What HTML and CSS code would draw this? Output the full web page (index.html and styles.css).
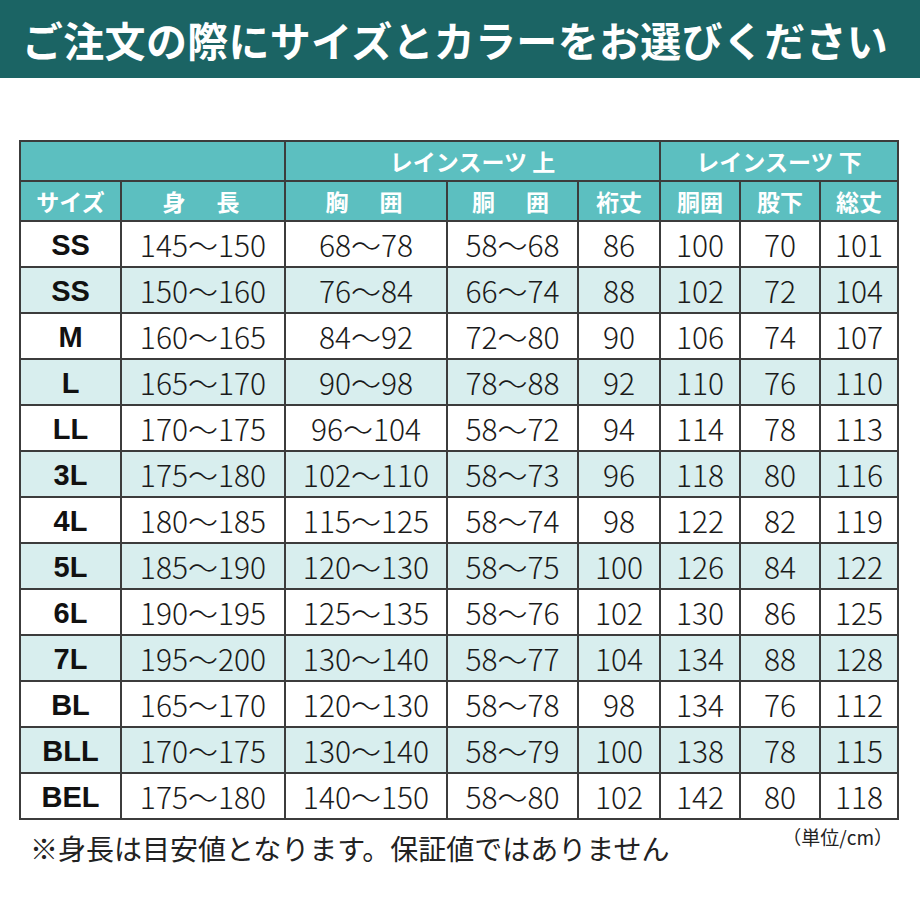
FILE: index.html
```html
<!DOCTYPE html>
<html lang="ja">
<head>
<meta charset="utf-8">
<link rel="stylesheet" href="styles.css">
</head>
<body>
<header class="title-bar"><h1 class="title">ご注文の際にサイズとカラーをお選びください</h1></header>
<main class="content">
<table class="size-table">
<colgroup>
<col class="c1"><col class="c2"><col class="c3"><col class="c4"><col class="c5"><col class="c6"><col class="c7"><col class="c8">
</colgroup>
<thead>
<tr class="hrow">
<th colspan="2"></th>
<th colspan="3">レインスーツ 上</th>
<th colspan="3">レインスーツ 下</th>
</tr>
<tr class="hrow">
<th>サイズ</th>
<th class="spaced">身　長</th>
<th class="spaced">胸　囲</th>
<th class="spaced">胴　囲</th>
<th>裄丈</th>
<th>胴囲</th>
<th>股下</th>
<th>総丈</th>
</tr>
</thead>
<tbody>
<tr><td class="size">SS</td><td>145～150</td><td>68～78</td><td>58～68</td><td>86</td><td>100</td><td>70</td><td>101</td></tr>
<tr class="alt"><td class="size">SS</td><td>150～160</td><td>76～84</td><td>66～74</td><td>88</td><td>102</td><td>72</td><td>104</td></tr>
<tr><td class="size">M</td><td>160～165</td><td>84～92</td><td>72～80</td><td>90</td><td>106</td><td>74</td><td>107</td></tr>
<tr class="alt"><td class="size">L</td><td>165～170</td><td>90～98</td><td>78～88</td><td>92</td><td>110</td><td>76</td><td>110</td></tr>
<tr><td class="size">LL</td><td>170～175</td><td>96～104</td><td>58～72</td><td>94</td><td>114</td><td>78</td><td>113</td></tr>
<tr class="alt"><td class="size">3L</td><td>175～180</td><td>102～110</td><td>58～73</td><td>96</td><td>118</td><td>80</td><td>116</td></tr>
<tr><td class="size">4L</td><td>180～185</td><td>115～125</td><td>58～74</td><td>98</td><td>122</td><td>82</td><td>119</td></tr>
<tr class="alt"><td class="size">5L</td><td>185～190</td><td>120～130</td><td>58～75</td><td>100</td><td>126</td><td>84</td><td>122</td></tr>
<tr><td class="size">6L</td><td>190～195</td><td>125～135</td><td>58～76</td><td>102</td><td>130</td><td>86</td><td>125</td></tr>
<tr class="alt"><td class="size">7L</td><td>195～200</td><td>130～140</td><td>58～77</td><td>104</td><td>134</td><td>88</td><td>128</td></tr>
<tr><td class="size">BL</td><td>165～170</td><td>120～130</td><td>58～78</td><td>98</td><td>134</td><td>76</td><td>112</td></tr>
<tr class="alt"><td class="size">BLL</td><td>170～175</td><td>130～140</td><td>58～79</td><td>100</td><td>138</td><td>78</td><td>115</td></tr>
<tr><td class="size">BEL</td><td>175～180</td><td>140～150</td><td>58～80</td><td>102</td><td>142</td><td>80</td><td>118</td></tr>
</tbody>
</table>
<div class="notes">
<p class="note">※身長は目安値となります。保証値ではありません</p>
<p class="unit">（単位/cm）</p>
</div>
</main>
</body>
</html>
```

FILE: styles.css
```css
html, body {
  margin: 0;
  padding: 0;
  background: #ffffff;
}
body {
  font-family: "Noto Sans CJK JP", "Noto Sans", sans-serif;
  color: #1a1a1a;
}
.title-bar {
  background: #1b6464;
  height: 78px;
  display: flex;
  align-items: center;
  padding-left: 22px;
  box-sizing: border-box;
}
.title {
  margin: 0;
  color: #ffffff;
  font-size: 41px;
  font-weight: 700;
  letter-spacing: 0.3px;
  line-height: 1;
  white-space: nowrap;
}
.content {
  padding: 62px 0 0 19px;
}
.size-table {
  border-collapse: collapse;
  width: 878px;
  table-layout: fixed;
}
.c1 { width: 101px; }
.c2 { width: 164px; }
.c3 { width: 162px; }
.c4 { width: 131px; }
.c5 { width: 82px; }
.c6 { width: 80px; }
.c7 { width: 80px; }
.c8 { width: 78px; }
.size-table th,
.size-table td {
  border: 2px solid #3c3c3c;
  text-align: center;
  padding: 0;
}
.hrow th {
  background: #5cbfc0;
  color: #ffffff;
  font-weight: 700;
  font-size: 23px;
  height: 38px;
  line-height: 1;
}
.spaced {
  letter-spacing: 4px;
}
.size-table td {
  height: 44px;
  font-size: 30px;
  font-weight: 300;
  line-height: 1;
  color: #1a1a1a;
}
.size-table tr.alt td {
  background: #d8eeee;
}
.size-table td.size {
  font-family: "Liberation Sans", "Noto Sans CJK JP", sans-serif;
  font-weight: 700;
  font-size: 29px;
  height: 41px;
  padding-top: 3px;
  color: #111111;
}
.notes {
  display: flex;
  justify-content: space-between;
  width: 878px;
  align-items: flex-start;
}
.note {
  margin: 8px 0 0 11px;
  font-size: 28px;
  font-weight: 400;
  color: #222222;
}
.unit {
  margin: 3px 4px 0 0;
  font-size: 19px;
  color: #222222;
}
```
